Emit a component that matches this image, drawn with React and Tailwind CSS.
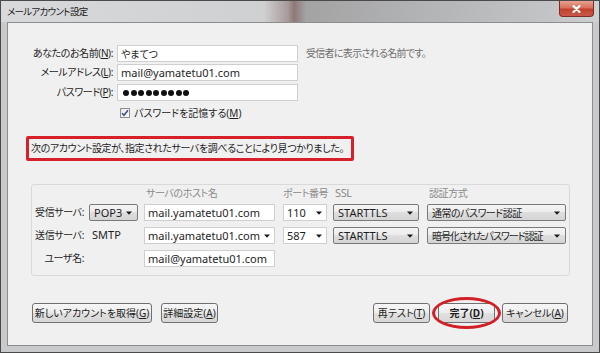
import React from "react";

function Arrow() {
  return (
    <svg width="6" height="4" viewBox="0 0 6 4" className="shrink-0">
      <path d="M0 0.5h6L3 3.8z" fill="#1a1a1a" />
    </svg>
  );
}

function Check() {
  return (
    <div className="w-[10px] h-[10px] border border-[#8e8f8f] bg-[linear-gradient(135deg,#e6e6e6,#ffffff)] flex items-center justify-center">
      <svg width="8" height="8" viewBox="0 0 8 8">
        <path d="M1 4.2 L3 6.3 L7 1.3" fill="none" stroke="#3d4f86" strokeWidth="1.6" />
      </svg>
    </div>
  );
}

const btn =
  "h-[20px] border border-[#707070] rounded-[3px] bg-[linear-gradient(#f6f6f6_0%,#ededed_50%,#e1e1e1_50%,#d7d7d7_100%)] flex items-center justify-center leading-none";

const dropdown =
  "h-[17px] border border-[#7a7a7a] rounded-[2px] bg-[linear-gradient(#f4f4f4_0%,#ececec_50%,#dedede_50%,#d4d4d4_100%)] flex items-center justify-between pl-[4px] pr-[5px] leading-none";

const input =
  "h-[17px] bg-white border border-[#cfcfcf] flex items-center px-[3px] leading-none";

const L = "text-[11px]";
const T = "tracking-[-0.4px]";

export default function App() {
  return (
    <div className="w-[600px] h-[353px] overflow-hidden whitespace-nowrap border border-[#4a4a4a] bg-[#c9cacc] flex flex-col font-['Noto_Sans','Noto_Sans_CJK_JP',sans-serif] text-[10px] text-[#1e1e1e] [font-feature-settings:'palt'] [font-variant-east-asian:proportional-width]">
      {/* title bar */}
      <div className="h-[21px] shrink-0 flex items-start bg-[linear-gradient(90deg,#d8d9da_0%,#cfd0d1_44%,#a79a9a_48%,#8e7777_49%,#a3a3a4_51%,#b2b3b4_70%,#c3c4c5_92%,#cfd0d1_100%)]">
        <div className="mt-[4px] ml-[6px] leading-[14px] text-[9.5px] tracking-[-0.7px] text-[#1b1b1b]">メールアカウント設定</div>
        <div className="ml-auto mr-[5px] w-[35px] h-[16px] rounded-b-[4px] border border-t-0 border-[#7a2f26] bg-[linear-gradient(#e9a192_0%,#d8705d_45%,#c2412c_55%,#c9584a_100%)] flex items-center justify-center">
          <svg width="9" height="8" viewBox="0 0 9 8">
            <path d="M1.5 1 L7.5 7 M7.5 1 L1.5 7" stroke="#ffffff" strokeWidth="2.2" strokeLinecap="round" />
          </svg>
        </div>
      </div>

      {/* client area */}
      <div className="mx-[6px] h-[324px] shrink-0 bg-[#f0f0f0] border border-[#8d8d8d] flex flex-col">
        {/* account rows */}
        <div className="pt-[22px] flex flex-col">
          <div className="flex items-center h-[17px]">
            <div className={`w-[105px] text-right ${T}`}>
              あなたのお名前(<u>N</u>):
            </div>
            <div className={`${input} ml-[4px] w-[181px]`}>やまてつ</div>
            <div className="ml-[8px] text-[#6d6d6d] tracking-[-0.7px]">受信者に表示される名前です。</div>
          </div>
          <div className="flex items-center h-[17px] mt-[2px]">
            <div className={`w-[105px] text-right ${T}`}>
              メールアドレス(<u>L</u>):
            </div>
            <div className={`${input} ${L} ml-[4px] w-[181px]`}>mail@yamatetu01.com</div>
          </div>
          <div className="flex items-center h-[17px] mt-[3px]">
            <div className={`w-[105px] text-right ${T}`}>
              パスワード(<u>P</u>):
            </div>
            <div className={`${input} ml-[4px] w-[181px] pl-[5px] gap-[1.5px]`}>
              {[0, 1, 2, 3, 4, 5, 6, 7, 8].map((i) => (
                <span key={i} className="w-[6px] h-[6px] rounded-full bg-[#111]" />
              ))}
            </div>
          </div>
          <div className="flex items-center h-[14px] mt-[5px] pl-[112px]">
            <Check />
            <div className="ml-[4px]">
              パスワードを記憶する(<u>M</u>)
            </div>
          </div>
        </div>

        {/* red notice */}
        <div className={`mt-[16px] ml-[18px] w-[328px] h-[25px] border-[3px] border-[#d8202a] rounded-[2px] flex items-center pl-[2px] ${T}`}>
          次のアカウント設定が、指定されたサーバを調べることにより見つかりました。
        </div>

        {/* server group */}
        <div className="mt-[23px] ml-[23px] w-[539px] h-[92px] border border-[#d9d9d9] rounded-[3px] flex flex-col">
          <div className={`flex items-center h-[14px] mt-[1px] text-[#8a8a8a] ${T}`}>
            <div className="w-[114px]" />
            <div className="w-[137px]">サーバのホスト名</div>
            <div className="w-[52px]">ポート番号</div>
            <div className={`w-[94px] ${L}`}>SSL</div>
            <div>認証方式</div>
          </div>
          <div className="flex items-center h-[17px] mt-[4px]">
            <div className={`w-[52px] text-right ${T}`}>受信サーバ:</div>
            <div className={`${dropdown} ${L} ml-[5px] w-[49px]`}>
              <span>POP3</span>
              <Arrow />
            </div>
            <div className={`${input} ${L} ml-[6px] w-[131px]`}>mail.yamatetu01.com</div>
            <div className={`${input} ${L} ml-[8px] w-[44px] justify-between pr-[4px]`}>
              <span>110</span>
              <Arrow />
            </div>
            <div className={`${dropdown} ${L} ml-[6px] w-[86px]`}>
              <span>STARTTLS</span>
              <Arrow />
            </div>
            <div className={`${dropdown} ml-[8px] w-[139px]`}>
              <span className="tracking-[-0.5px]">通常のパスワード認証</span>
              <Arrow />
            </div>
          </div>
          <div className="flex items-center h-[17px] mt-[6px]">
            <div className={`w-[52px] text-right ${T}`}>送信サーバ:</div>
            <div className={`ml-[5px] w-[49px] pl-[3px] ${L}`}>SMTP</div>
            <div className={`${input} ${L} ml-[6px] w-[131px] justify-between pr-[4px]`}>
              <span>mail.yamatetu01.com</span>
              <Arrow />
            </div>
            <div className={`${input} ${L} ml-[8px] w-[44px] justify-between pr-[4px]`}>
              <span>587</span>
              <Arrow />
            </div>
            <div className={`${dropdown} ${L} ml-[6px] w-[86px]`}>
              <span>STARTTLS</span>
              <Arrow />
            </div>
            <div className={`${dropdown} ml-[8px] w-[139px]`}>
              <span className="tracking-[-1px]">暗号化されたパスワード認証</span>
              <Arrow />
            </div>
          </div>
          <div className="flex items-center h-[17px] mt-[6px]">
            <div className={`w-[52px] text-right ${T}`}>ユーザ名:</div>
            <div className={`${input} ${L} ml-[60px] w-[131px]`}>mail@yamatetu01.com</div>
          </div>
        </div>

        {/* buttons */}
        <div className="mt-[27px] flex items-center px-[24px]">
          <div className={`${btn} w-[120px]`}>
            新しいアカウントを取得(<u>G</u>)
          </div>
          <div className={`${btn} ml-[9px] w-[57px]`}>
            詳細設定(<u>A</u>)
          </div>
          <div className={`${btn} ml-auto w-[57px] border-[#3c7fb1] bg-[linear-gradient(#f3f6f8_0%,#e9eef2_50%,#dbe3e9_50%,#d2dce3_100%)]`}>
            再テスト(<u>T</u>)
          </div>
          <div className="relative ml-[8px] w-[57px]">
            <div className={`${btn} w-[57px] font-bold`}>
              完了(<u>D</u>)
            </div>
            <div className="absolute -left-[6px] -right-[6px] -top-[6px] -bottom-[6px] border-[3px] border-[#d21f26] rounded-[50%]" />
          </div>
          <div className={`${btn} ml-[7px] w-[66px]`}>
            キャンセル(<u>A</u>)
          </div>
        </div>
      </div>
    </div>
  );
}
